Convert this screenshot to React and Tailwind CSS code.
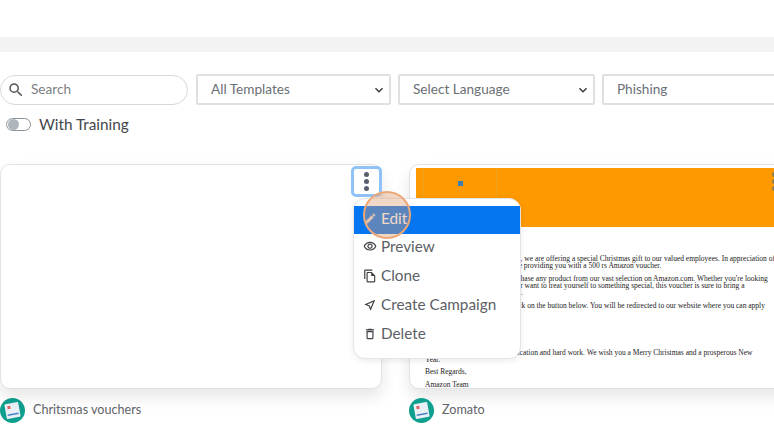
function Icon({ d, size = 14, className }) {
  return (
    <svg width={size} height={size} viewBox="0 0 24 24" fill="currentColor" className={className}>
      <path d={d} />
    </svg>
  );
}

const ICONS = {
  search: 'M15.5 14h-.79l-.28-.27A6.47 6.47 0 0016 9.5 6.5 6.5 0 109.5 16c1.61 0 3.09-.59 4.23-1.57l.27.28v.79l5 4.99L20.49 19l-4.99-5zm-6 0C7.01 14 5 11.99 5 9.5S7.01 5 9.5 5 14 7.01 14 9.5 11.99 14 9.5 14z',
  edit: 'M3 17.25V21h3.75L17.81 9.94l-3.75-3.75L3 17.25zM20.71 7.04a1 1 0 000-1.41l-2.34-2.34a1 1 0 00-1.41 0l-1.83 1.83 3.75 3.75 1.83-1.83z',
  eye: 'M12 6c3.79 0 7.17 2.13 8.82 5.5C19.17 14.87 15.79 17 12 17s-7.17-2.13-8.82-5.5C4.83 8.13 8.21 6 12 6m0-2C7 4 2.73 7.11 1 11.5 2.73 15.89 7 19 12 19s9.27-3.11 11-7.5C21.27 7.11 17 4 12 4zm0 5c1.38 0 2.5 1.12 2.5 2.5S13.38 14 12 14s-2.5-1.12-2.5-2.5S10.62 9 12 9m0-2c-2.48 0-4.5 2.02-4.5 4.5S9.52 16 12 16s4.5-2.02 4.5-4.5S14.48 7 12 7z',
  copy: 'M16 1H4c-1.1 0-2 .9-2 2v14h2V3h12V1zm-1 4H8c-1.1 0-1.99.9-1.99 2L6 21c0 1.1.89 2 1.99 2H19c1.1 0 2-.9 2-2V11l-6-6zM8 21V7h6v5h5v9H8z',
  send: 'M17.27 6.73l-4.24 10.13-1.32-3.42-.32-.83-.82-.32-3.43-1.33 10.13-4.23M21 3L3 10.53v.98l6.84 2.65L12.48 21h.98L21 3z',
  trash: 'M16 9v10H8V9h8m-1.5-6h-5l-1 1H5v2h14V4h-3.5l-1-1zM18 7H6v12c0 1.1.9 2 2 2h8c1.1 0 2-.9 2-2V7z',
  chevron: 'M7.41 8.59L12 13.17l4.59-4.58L18 10l-6 6-6-6 1.41-1.41z',
};

function TemplateLogo() {
  return (
    <svg width="25" height="25" viewBox="0 0 25 25" className="shrink-0">
      <circle cx="12.5" cy="12.5" r="12.5" fill="#0f9f8f" />
      <g transform="rotate(-10 12.5 12.5)">
        <rect x="5.5" y="5" width="14" height="15" rx="1" fill="#e9f0f6" />
        <rect x="8" y="7.5" width="3" height="3" fill="#e0606a" />
        <rect x="7" y="15.5" width="11" height="1.5" fill="#4a80c8" />
      </g>
    </svg>
  );
}

function FilterSelect({ label, className }) {
  return (
    <div className={`flex h-[31px] shrink-0 items-center justify-between rounded-[2px] border-2 border-[#e0e0e0] pl-[13px] pr-[2px] text-[13.6px] text-[#6a6f75] ${className}`}>
      <span className="pb-[1px]">{label}</span>
      <Icon d={ICONS.chevron} size={16} className="text-[#34373b]" />
    </div>
  );
}

function MenuItem({ icon, label, active, size = 13 }) {
  return (
    <div className={`flex items-center gap-[4px] pb-[4px] pl-[9px] text-[15.3px] ${active ? 'h-[28px] bg-[#0676f0] text-white' : 'h-[29px] text-[#5c5f66]'}`}>
      <span className={`flex w-[14px] justify-center ${active ? 'text-[#dcdcdc]' : 'text-[#3f4044]'}`}>
        <Icon d={ICONS[icon]} size={size} />
      </span>
      <span>{label}</span>
    </div>
  );
}

export default function App() {
  return (
    <div className="h-[434px] w-[774px] overflow-hidden bg-white font-['Lato','Noto_Sans',sans-serif]">
      {/* top bar */}
      <div className="h-[37px] bg-white" />
      <div className="h-[15px] bg-[#f3f3f3]" />

      {/* filters */}
      <div className="flex items-center pt-[22px]">
        <div className="flex h-[30px] w-[188px] shrink-0 items-center gap-[6px] rounded-full border border-[#d8d8d8] pl-[6px] text-[13.6px] text-[#7b7f85]">
          <Icon d={ICONS.search} size={18} className="text-[#55585c]" />
          <span className="pb-[1px]">Search</span>
        </div>
        <FilterSelect label="All Templates" className="ml-[8px] w-[195px]" />
        <FilterSelect label="Select Language" className="ml-[7px] w-[197px]" />
        <div className="ml-[7px] flex h-[31px] w-[180px] shrink-0 items-center rounded-[2px] border-2 border-[#e0e0e0] pb-[1px] pl-[13px] text-[13.6px] text-[#6a6f75]">
          Phishing
        </div>
      </div>

      {/* with training */}
      <div className="mt-[9px] flex items-center gap-[8px] pl-[6px]">
        <div className="flex h-[13px] w-[25px] items-center rounded-full border border-[#8a9299] pl-[1px]">
          <div className="h-[11px] w-[11px] rounded-full bg-[#adb5bd]" />
        </div>
        <span className="text-[15.3px] leading-[20px] text-[#44474c]">With Training</span>
      </div>

      {/* cards */}
      <div className="mt-[30px] flex gap-[27px]">
        <div className="w-[382px] shrink-0">
          <div className="relative h-[225px] rounded-[10px] border border-[#e2e2e2] bg-white shadow-[0_8px_16px_rgba(0,0,0,0.10)]">
            <div className="absolute left-[350px] top-[1px] flex h-[31px] w-[31px] items-center justify-center rounded-[5px] border-[3px] border-[#8fc2f7] bg-white">
              <div className="flex flex-col gap-[2px]">
                <div className="h-[5px] w-[5px] rounded-full bg-[#5a5f70]" />
                <div className="h-[5px] w-[5px] rounded-full bg-[#5a5f70]" />
                <div className="h-[5px] w-[5px] rounded-full bg-[#5a5f70]" />
              </div>
            </div>
            {/* dropdown menu */}
            <div className="absolute left-[352px] top-[33px] z-20 w-[168px] rounded-[12px] border border-[#e4e4e4] bg-white pb-[8px] pt-[7px] shadow-[0_2px_6px_rgba(0,0,0,0.08)]">
              <MenuItem active icon="edit" label="Edit" />
              <MenuItem icon="eye" size={15} label="Preview" />
              <MenuItem icon="copy" size={14} label="Clone" />
              <MenuItem icon="send" size={14} label="Create Campaign" />
              <MenuItem icon="trash" size={14} label="Delete" />
            </div>
            {/* highlight circle */}
            <div className="absolute left-[362px] top-[26px] z-30 h-[48px] w-[48px] rounded-full border-[2px] border-[#eda878] bg-[#df9e70]/40" />
          </div>
          <div className="mt-[9px] flex items-center gap-[8px]">
            <TemplateLogo />
            <span className="text-[12.6px] text-[#5f6368]">Chritsmas vouchers</span>
          </div>
        </div>

        <div className="w-[420px] shrink-0">
          <div className="h-[225px] overflow-hidden rounded-[10px] border border-[#e2e2e2] bg-white pl-[6px] pt-[3px] shadow-[0_8px_16px_rgba(0,0,0,0.10)]">
            <div className="relative flex h-[59px] w-[404px] bg-[#ff9900]">
              <div className="w-[8px] border-r border-[#f0a020]" />
              <div className="flex w-[73px] justify-center border-r border-[#f0a020] pt-[13px]">
                <div className="h-[5px] w-[5px] bg-[#3f7fb0]" />
              </div>
              <div className="absolute left-[356px] top-[4px] flex flex-col gap-[2px]">
                <div className="h-[5px] w-[5px] rounded-full bg-[#8a7a55]" />
                <div className="h-[5px] w-[5px] rounded-full bg-[#8a7a55]" />
                <div className="h-[5px] w-[5px] rounded-full bg-[#8a7a55]" />
              </div>
            </div>
            <div className="whitespace-nowrap pl-[9px] pt-[28px] font-['Liberation_Serif',serif] text-[7.5px] leading-[7px] text-[#222]">
              <p>This holiday season, at Amazon, we are offering a special Christmas gift to our valued employees. In appreciation of</p>
              <p>your hard work this year, we are providing you with a 500 rs Amazon voucher.</p>
              <p className="mt-[6px]">With this voucher, you can purchase any product from our vast selection on Amazon.com. Whether you're looking</p>
              <p>for a gift for a friend at home, or want to treat yourself to something special, this voucher is sure to bring a</p>
              <p>smile to you this holiday season.</p>
              <p className="mt-[6px]">To redeem your gift, simply click on the button below. You will be redirected to our website where you can apply</p>
              <p className="mt-[40px]">Thanks for your continued dedication and hard work. We wish you a Merry Christmas and a prosperous New</p>
              <p>Year.</p>
              <p className="mt-[5px]">Best Regards,</p>
              <p className="mt-[6px]">Amazon Team</p>
            </div>
          </div>
          <div className="mt-[9px] flex items-center gap-[8px]">
            <TemplateLogo />
            <span className="text-[12.6px] text-[#5f6368]">Zomato</span>
          </div>
        </div>
      </div>
    </div>
  );
}
